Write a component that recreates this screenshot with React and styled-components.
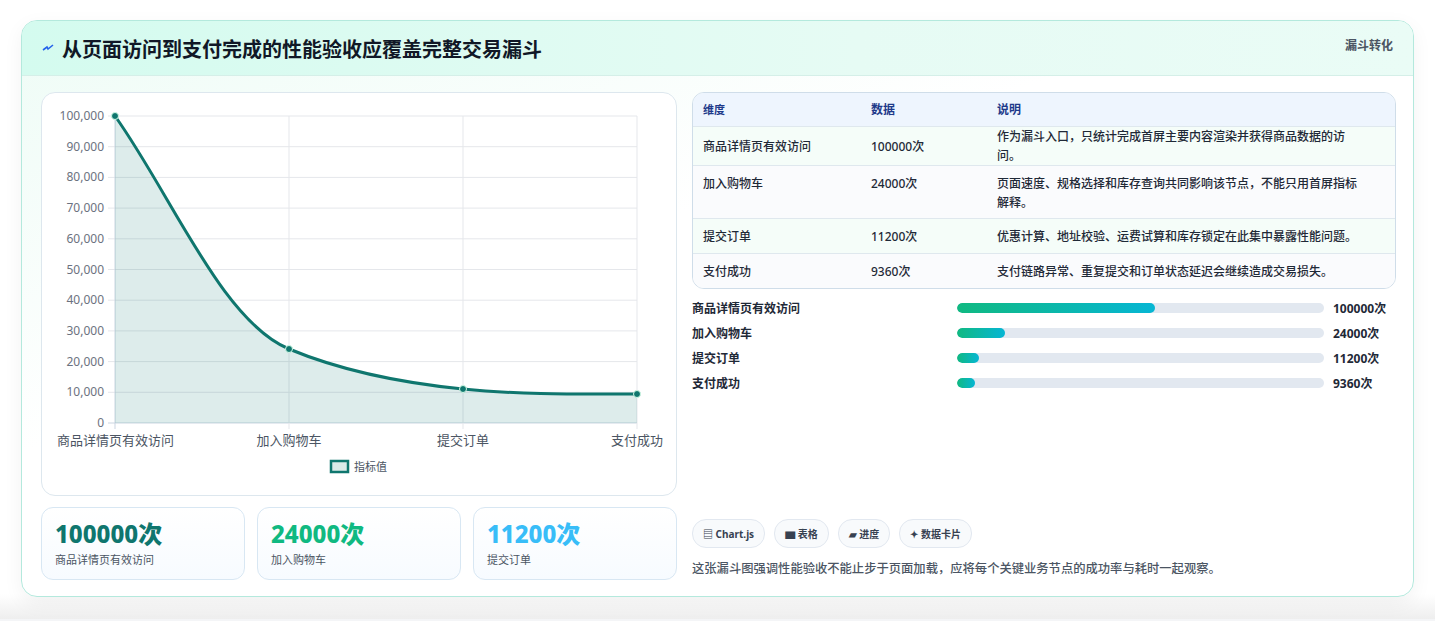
import React from "react"
import styled, { createGlobalStyle } from "styled-components"

const Global = createGlobalStyle`
  body {
    margin: 0;
    background: #f4f5f7;
    font-family: "Noto Sans", "Noto Sans CJK SC", sans-serif;
  }
`

const Page = styled.div`
  padding: 20px 21px 22px 21px;
  background: linear-gradient(180deg, #ffffff 0%, #ffffff 96%, #eeeeee 100%);
`

const Card = styled.div`
  border: 1px solid #b4e9dd;
  border-radius: 16px;
  overflow: hidden;
  background: linear-gradient(160deg, #eefcf6 0%, #ffffff 40%, #ffffff 100%);
  box-shadow: 0 6px 20px rgba(0, 0, 0, 0.05);
`

const Header = styled.div`
  height: 54px;
  display: flex;
  align-items: center;
  justify-content: space-between;
  padding: 0 20px 0 20px;
  background: linear-gradient(90deg, #d4fbef 0%, #e6fbf4 60%, #eafcf6 100%);
  border-bottom: 1px solid #d5efe8;
`

const Title = styled.h1`
  margin: 0;
  font-size: 20px;
  font-weight: 700;
  color: #111827;
  display: flex;
  align-items: center;
  gap: 8px;
`

const Tag = styled.div`
  font-size: 12px;
  font-weight: 700;
  color: #4b5563;
  align-self: flex-start;
  margin-top: 15px;
  margin-right: 0;
`

const Body = styled.div`
  display: grid;
  grid-template-columns: 636px 704px;
  gap: 15px;
  padding: 16px 19px 16px 19px;
`

const Column = styled.div`
  display: flex;
  flex-direction: column;
`

const ChartBox = styled.div`
  height: 402px;
  border: 1px solid #dde7ee;
  border-radius: 14px;
  background: #fff;
`

const Stats = styled.div`
  display: grid;
  grid-template-columns: repeat(3, 1fr);
  gap: 12px;
  margin-top: 11px;
`

const Stat = styled.div`
  height: 73px;
  border: 1px solid #d8e7f3;
  border-radius: 12px;
  background: linear-gradient(180deg, #ffffff, #f7fbff);
  padding: 10px 13px;
  box-sizing: border-box;
`

const StatValue = styled.div`
  font-size: 24px;
  font-weight: 800;
  line-height: 32px;
  color: ${p => p.color};
`

const StatLabel = styled.div`
  font-size: 11px;
  color: #4b5563;
  margin-top: 1px;
`

const Table = styled.div`
  border: 1px solid #cfdde9;
  border-radius: 12px;
  overflow: hidden;
  font-size: 12px;
  color: #1f2937;
`

const Row = styled.div`
  display: grid;
  grid-template-columns: 168px 126px 1fr;
  padding: 0 10px;
  min-height: ${p => p.h}px;
  align-items: ${p => (p.top ? "start" : "center")};
  padding-top: ${p => (p.top ? "8px" : "0")};
  box-sizing: border-box;
  background: ${p => p.bg};
  border-top: ${p => (p.first ? "none" : "1px solid #dfe8ee")};
  color: ${p => (p.head ? "#1e3a8a" : "#1f2937")};
  font-weight: ${p => (p.head ? 700 : 500)};
  line-height: 19px;
  & > div:first-child { font-size: ${p => (p.head ? "11px" : "12px")}; }
  & > div:last-child { padding-right: 22px; }
`

const Bars = styled.div`
  display: flex;
  flex-direction: column;
  gap: 9px;
  margin-top: 10px;
`

const BarRow = styled.div`
  display: grid;
  grid-template-columns: 265px 367px 1fr;
  align-items: center;
  height: 16px;
  font-size: 12px;
  font-weight: 600;
  color: #1f2937;
`

const Track = styled.div`
  height: 10px;
  border-radius: 5px;
  background: #e2e8f0;
  overflow: hidden;
`

const Fill = styled.div`
  height: 100%;
  border-radius: 5px;
  background: linear-gradient(90deg, #10b981, #06b6d4);
`

const BarValue = styled.div`
  padding-left: 9px;
  font-weight: 700;
`

const Chips = styled.div`
  display: flex;
  gap: 9px;
  margin-top: auto;
`

const Chip = styled.div`
  height: 27px;
  padding: 0 10px;
  border: 1px solid #e2e8f0;
  border-radius: 14px;
  background: #f8fafc;
  display: flex;
  align-items: center;
  gap: 4px;
  font-size: 10px;
  font-weight: 700;
  color: #374151;
`

const Note = styled.p`
  margin: 11px 0 3px 0;
  font-size: 12.3px;
  color: #4b5563;
  font-weight: 500;
`

const ys = [0, 10000, 20000, 30000, 40000, 50000, 60000, 70000, 80000, 90000, 100000]
const xs = [73, 247, 421, 595]
const py = v => 330 - v * 0.00307
const xl = ["商品详情页有效访问", "加入购物车", "提交订单", "支付成功"]
const curve = "M73,23 C130,103 180,228 247,256 C300,278 360,290 421,296 C480,302 540,301 595,301"

const Chart = () => (
  <svg width="636" height="400" viewBox="0 0 636 400" fontFamily="'Noto Sans','Noto Sans CJK SC',sans-serif">
    {ys.map(v => (
      <g key={v}>
        <line x1="66" x2="595" y1={py(v)} y2={py(v)} stroke={v === 0 ? "#cbd5e1" : "#e5e7eb"} />
        <text x="62" y={py(v) + 4} fontSize="12" fill="#6b7280" textAnchor="end">
          {v.toLocaleString("en-US")}
        </text>
      </g>
    ))}
    {xs.map((x, i) => (
      <g key={x}>
        <line x1={x} x2={x} y1="23" y2="336" stroke={i === 0 ? "#cbd5e1" : "#e5e7eb"} />
        <text x={x} y="352" fontSize="13" fill="#4b5563" textAnchor={i === 0 ? "start" : i === 3 ? "end" : "middle"} dx={i === 0 ? -58 : i === 3 ? 26 : 0}>
          {xl[i]}
        </text>
      </g>
    ))}
    <path d={curve + " L595,330 L73,330 Z"} fill="rgba(15,118,110,0.14)" />
    <path d={curve} fill="none" stroke="#0f766e" strokeWidth="3" />
    {[[73, 23], [247, 256], [421, 296], [595, 301]].map(([x, y]) => (
      <circle key={x} cx={x} cy={y} r="3.5" fill="#0f766e" stroke="#d1fae5" strokeWidth="1" />
    ))}
    <rect x="289" y="368" width="17" height="11" fill="#dbeae8" stroke="#0f766e" strokeWidth="2.5" />
    <text x="312" y="378" fontSize="11" fill="#4b5563">指标值</text>
  </svg>
)

const rows = [
  ["商品详情页有效访问", "100000次", "作为漏斗入口，只统计完成首屏主要内容渲染并获得商品数据的访问。", 35, "#f5fdf9"],
  ["加入购物车", "24000次", "页面速度、规格选择和库存查询共同影响该节点，不能只用首屏指标解释。", 53, "#fafbfd"],
  ["提交订单", "11200次", "优惠计算、地址校验、运费试算和库存锁定在此集中暴露性能问题。", 35, "#f5fdf9"],
  ["支付成功", "9360次", "支付链路异常、重复提交和订单状态延迟会继续造成交易损失。", 35, "#fafbfd"],
]

const bars = [["商品详情页有效访问", 198, "100000次"], ["加入购物车", 48, "24000次"], ["提交订单", 22, "11200次"], ["支付成功", 18, "9360次"]]

export default function App() {
  return (
    <Page>
      <Global />
      <Card>
        <Header>
          <Title>
            <svg width="12" height="10" viewBox="0 0 12 10">
              <path d="M1 7 L5 4 L6 6 L11 2" stroke="#2563eb" strokeWidth="1.6" fill="none" />
            </svg>
            从页面访问到支付完成的性能验收应覆盖完整交易漏斗
          </Title>
          <Tag>漏斗转化</Tag>
        </Header>
        <Body>
          <Column>
            <ChartBox>
              <Chart />
            </ChartBox>
            <Stats>
              <Stat>
                <StatValue color="#0f766e">100000次</StatValue>
                <StatLabel>商品详情页有效访问</StatLabel>
              </Stat>
              <Stat>
                <StatValue color="#10b981">24000次</StatValue>
                <StatLabel>加入购物车</StatLabel>
              </Stat>
              <Stat>
                <StatValue color="#38bdf8">11200次</StatValue>
                <StatLabel>提交订单</StatLabel>
              </Stat>
            </Stats>
          </Column>
          <Column>
            <Table>
              <Row head first h={33} bg="#eef5fe">
                <div>维度</div>
                <div>数据</div>
                <div>说明</div>
              </Row>
              {rows.map(r => (
                <Row key={r[0]} h={r[3]} bg={r[4]} top={r[3] > 40}>
                  <div>{r[0]}</div>
                  <div>{r[1]}</div>
                  <div>{r[2]}</div>
                </Row>
              ))}
            </Table>
            <Bars>
              {bars.map(b => (
                <BarRow key={b[0]}>
                  <div>{b[0]}</div>
                  <Track>
                    <Fill style={{ width: b[1] }} />
                  </Track>
                  <BarValue>{b[2]}</BarValue>
                </BarRow>
              ))}
            </Bars>
            <Chips>
              <Chip>▤ Chart.js</Chip>
              <Chip>▆ 表格</Chip>
              <Chip>▰ 进度</Chip>
              <Chip>✦ 数据卡片</Chip>
            </Chips>
            <Note>这张漏斗图强调性能验收不能止步于页面加载，应将每个关键业务节点的成功率与耗时一起观察。</Note>
          </Column>
        </Body>
      </Card>
    </Page>
  )
}
